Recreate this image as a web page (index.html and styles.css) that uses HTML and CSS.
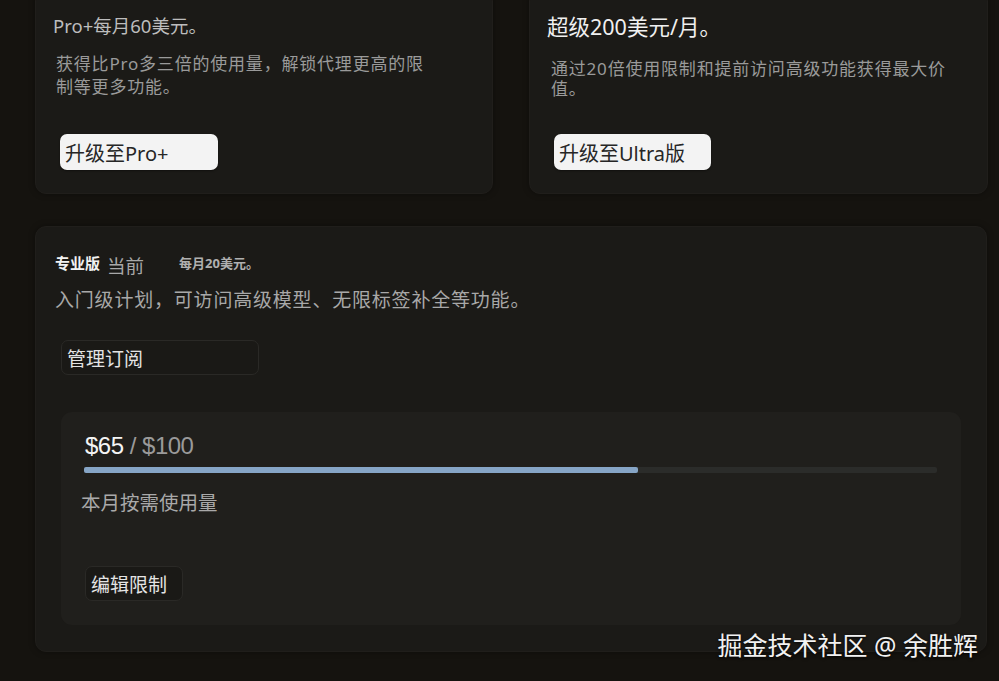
FILE: index.html
```html
<!DOCTYPE html>
<html lang="zh-CN">
<head>
    <meta charset="UTF-8">
    <meta name="viewport" content="width=device-width, initial-scale=1.0">
    <title>订阅</title>
    <link rel="stylesheet" href="styles.css">
</head>
<body>
    <main class="pagina">
        <section class="piani">
            <div class="card">
                <h2 class="titolo">Pro+每月60美元。</h2>
                <p class="desc desc-stretta">获得比Pro多三倍的使用量，解锁代理更高的限制等更多功能。</p>
                <button class="btnChiaro">升级至Pro+</button>
            </div>
            <div class="card card-ultra">
                <h2 class="titolo titolo-grande">超级200美元/月。</h2>
                <p class="desc desc-larga">通过20倍使用限制和提前访问高级功能获得最大价值。</p>
                <button class="btnChiaro">升级至Ultra版</button>
            </div>
        </section>

        <section class="card corrente">
            <div class="intestazione">
                <span class="nomePiano">专业版</span>
                <span class="badge">当前</span>
                <span class="prezzo">每月20美元。</span>
            </div>
            <p class="descPiano">入门级计划，可访问高级模型、无限标签补全等功能。</p>
            <button class="btnScuro btnGestisci">管理订阅</button>

            <div class="utilizzo">
                <div class="importo"><span class="speso">$65</span> / $100</div>
                <div class="barra"><div class="riempimento" style="width: 65%"></div></div>
                <p class="etichetta">本月按需使用量</p>
                <button class="btnScuro">编辑限制</button>
            </div>
        </section>
    </main>

    <div class="filigrana">掘金技术社区 @ 余胜辉</div>
</body>
</html>
```

FILE: styles.css
```css
body {
    margin: 0;
    background-color: #15130f;
    font-family: "Noto Sans", "Noto Sans CJK SC", sans-serif;
    color: #ddd;
    height: 681px;
    overflow: hidden;
    position: relative;
}

.pagina {
    padding: 0 11px 0 35px;
}

.piani {
    display: grid;
    grid-template-columns: 458px 459px;
    gap: 36px;
    margin-top: -10px;
}

.card {
    background-color: #1b1a17;
    border: 1px solid #201e1b;
    border-radius: 11px;
    box-shadow: 0 0 6px rgba(0, 0, 0, 0.35);
}

.piani .card {
    padding: 22px 17px 23px 17px;
}

.titolo {
    margin: 0;
    font-size: 18.5px;
    font-weight: normal;
    line-height: 26px;
    color: #bdbdbd;
}

.titolo-grande {
    font-size: 21.5px;
    line-height: 28px;
    color: #f0f0f0;
}

.desc {
    margin: 13px 0 0 3px;
    font-size: 17px;
    line-height: 23px;
    color: #9a9a9a;
}

.desc-stretta {
    max-width: 378px;
    letter-spacing: 0.8px;
}

.desc-larga {
    margin: 18px 0 0 4px;
    max-width: 405px;
    line-height: 20px;
    letter-spacing: 0.8px;
}

.btnChiaro {
    display: block;
    margin: 36px 0 0 7px;
    width: 158px;
    height: 36px;
    padding: 0 5px;
    text-align: left;
    background-color: #f3f3f3;
    color: #262626;
    border: none;
    border-radius: 7px;
    font-family: inherit;
    font-size: 20px;
    box-shadow: 0 1px 2px rgba(0, 0, 0, 0.4);
}

.card-ultra .btnChiaro {
    margin-top: 35px;
    width: 157px;
}

.corrente {
    margin-top: 32px;
    width: 952px;
    box-sizing: border-box;
    padding: 23px 25px 26px 25px;
}

.intestazione {
    display: flex;
    align-items: center;
    height: 24px;
    margin-left: -6px;
}

.nomePiano {
    font-size: 15px;
    font-weight: bold;
    color: #f2f2f2;
}

.badge {
    margin-left: 7px;
    margin-top: 6px;
    font-size: 18.5px;
    color: #a8a8a8;
}

.prezzo {
    margin-left: 35px;
    font-size: 13px;
    font-weight: bold;
    color: #b0b0b0;
}

.descPiano {
    margin: 13px 0 0 -6px;
    font-size: 19px;
    letter-spacing: 0.8px;
    line-height: 26px;
    color: #a8a8a8;
}

.btnScuro {
    display: block;
    height: 35px;
    padding: 0 5px;
    text-align: left;
    background-color: #1a1916;
    color: #e4e4e4;
    border: 1px solid #2a2926;
    border-radius: 7px;
    font-family: inherit;
    font-size: 19px;
}

.btnGestisci {
    margin-top: 27px;
    width: 198px;
}

.utilizzo {
    margin-top: 37px;
    background-color: #201f1c;
    border-radius: 11px;
    padding: 19px 24px 24px 24px;
}

.importo {
    font-family: "Liberation Sans", Arial, sans-serif;
    font-size: 24px;
    line-height: 30px;
    color: #9a9a9a;
    letter-spacing: -0.5px;
}

.speso {
    color: #f4f4f4;
}

.barra {
    margin-top: 6px;
    margin-left: -1px;
    height: 6px;
    background-color: #2b2c2a;
    border-radius: 2px;
}

.riempimento {
    height: 100%;
    background-color: #86a5c6;
    border-radius: 2px;
}

.etichetta {
    margin: 17px 0 0 -4px;
    font-size: 19.5px;
    line-height: 26px;
    color: #a9a9a9;
}

.utilizzo .btnScuro {
    margin-top: 50px;
    width: 98px;
}

.filigrana {
    position: absolute;
    right: 21px;
    top: 628px;
    font-size: 25px;
    line-height: 34px;
    color: #f2f2f2;
    text-shadow: 0 1px 3px rgba(0, 0, 0, 0.9);
}
```
